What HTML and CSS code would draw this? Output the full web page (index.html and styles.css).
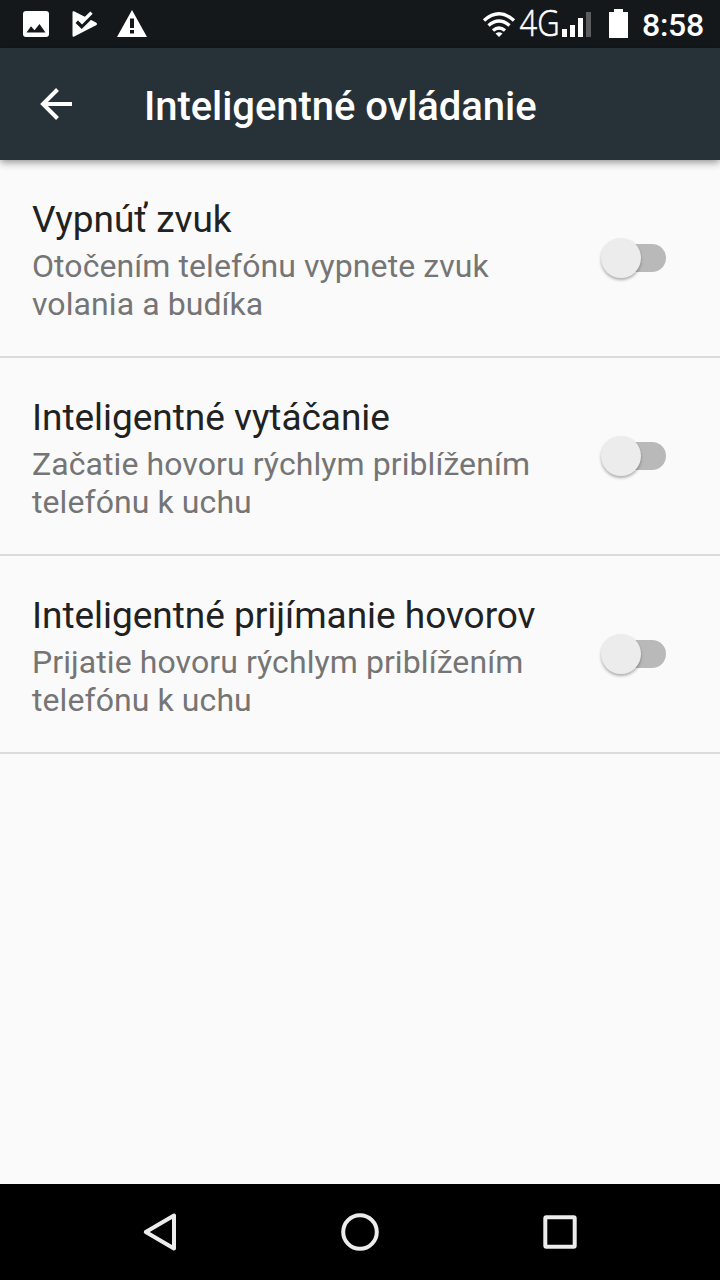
FILE: index.html
```html
<!DOCTYPE html>
<html lang="sk">
<head>
<meta charset="utf-8">
<title>Inteligentné ovládanie</title>
<link rel="stylesheet" href="styles.css">
</head>
<body>
<div class="screen">
  <div class="status">
    <svg class="notifications" width="180" height="48" viewBox="0 0 180 48" fill="#fff">
      <path fill-rule="evenodd" d="M26 11H46Q49 11 49 14V34Q49 37 46 37H26Q23 37 23 34V14Q23 11 26 11ZM26.5 32.5H45.5L39.5 24L34.5 30.3L31 26.2Z"/>
      <path d="M74 11.3Q72.500 10.700 72.500 12.500V35.500Q72.500 37.300 74.200 36.500L96 25.300Q98 24 96 22.500L74 11.300Z"/>
      <path d="M77 21.500L81.700 26.200L97 11" fill="none" stroke="#14181b" stroke-width="4"/>
      <path d="M79.200 19.300L82 22L91.500 12.600" fill="none" stroke="#fff" stroke-width="3.400"/>
      <path fill-rule="evenodd" d="M132 10L147 37H117ZM130 18.500V28H134V18.500ZM130 30V33.500H134V30Z"/>
    </svg>
    <svg class="signals" width="160" height="48" viewBox="472 0 160 48">
      <g fill="none" stroke="#fff" stroke-width="3.400">
        <path d="M484 20.500Q499 7.200 514 20.500"/>
        <path d="M488.500 25.500Q499 16.500 509.500 25.500"/>
        <path d="M493 30.500Q499 25.500 505 30.500"/>
      </g>
      <path d="M495.500 33.500Q499 31 502.500 33.500L499 37Z" fill="#fff"/>
      <text class="network" x="519.500" y="35.700" textLength="40" lengthAdjust="spacingAndGlyphs">4G</text>
      <path d="M562 29h5v8h-5zM570 25h5v12h-5zM578 18h5v19h-5z" fill="#fff"/>
      <path d="M586 12h5v25h-5z" fill="#5b5d5f"/>
      <path d="M614 9h9v3h5v26h-19V12h5z" fill="#fff"/>
    </svg>
    <span class="clock">8:58</span>
  </div>
  <header class="appbar">
    <svg width="40" height="40" viewBox="36 84 40 40" fill="none" stroke="#fff" stroke-width="4"><path d="M72 104H43M57.500 89.500L43 104L57.500 118.500"/></svg>
    <h1 class="heading">Inteligentné ovládanie</h1>
  </header>
  <main class="list">
    <section class="row">
      <div class="label"><h2 class="title">Vypnúť zvuk</h2><p class="summary">Otočením telefónu vypnete zvuk<br>volania a budíka</p></div>
      <div class="switch"><span class="thumb"></span></div>
    </section>
    <section class="row">
      <div class="label"><h2 class="title">Inteligentné vytáčanie</h2><p class="summary">Začatie hovoru rýchlym priblížením<br>telefónu k uchu</p></div>
      <div class="switch"><span class="thumb"></span></div>
    </section>
    <section class="row">
      <div class="label"><h2 class="title">Inteligentné prijímanie hovorov</h2><p class="summary">Prijatie hovoru rýchlym priblížením<br>telefónu k uchu</p></div>
      <div class="switch"><span class="thumb"></span></div>
    </section>
  </main>
  <nav class="navbar">
    <svg width="40" height="40" viewBox="0 0 40 40"><path d="M5.800 20L34 3.500V36.500Z"/></svg>
    <svg width="40" height="40" viewBox="0 0 40 40"><circle cx="20" cy="20" r="16.800"/></svg>
    <svg width="40" height="40" viewBox="0 0 40 40"><rect x="5.300" y="5.300" width="29.400" height="29.400" rx="1"/></svg>
  </nav>
</div>
</body>
</html>
```
FILE: styles.css
```css
body {
  margin: 0;
  background: #fafafa;
  font-family: Roboto, "Liberation Sans", sans-serif;
}
h1, h2, p {
  margin: 0;
}
svg {
  display: block;
  flex: none;
}
.screen {
  width: 720px;
  height: 1280px;
  display: flex;
  flex-direction: column;
  overflow: hidden;
}
.status {
  height: 48px;
  display: flex;
  background: #14181b;
  color: #fff;
}
.signals {
  margin-left: 292px;
  overflow: visible;
}
.network {
  font-family: "Open Sans", sans-serif;
  font-size: 37px;
  font-weight: 300;
  fill: #fff;
  stroke: #fff;
  stroke-width: 0.6px;
}
.clock {
  margin-left: 10px;
  line-height: 50px;
  font-size: 32px;
  font-weight: 500;
  letter-spacing: -0.3px;
}
.appbar {
  height: 112px;
  display: flex;
  align-items: center;
  padding-left: 36px;
  box-sizing: border-box;
  background: #273238;
  color: #fff;
  box-shadow: 0 2px 8px rgba(0, 0, 0, 0.45);
}
.heading {
  margin-left: 68px;
  padding-top: 6px;
  font-size: 40px;
  line-height: 48px;
  font-weight: 500;
  letter-spacing: -0.07px;
  white-space: nowrap;
}
.list {
  flex: 1;
}
.row {
  height: 198px;
  box-sizing: border-box;
  padding: 37px 54px 0 32px;
  border-bottom: 2px solid #dbdbdb;
  display: flex;
  justify-content: space-between;
}
.label {
  white-space: nowrap;
}
.title {
  font-size: 37px;
  line-height: 46px;
  font-weight: 400;
  letter-spacing: -0.03px;
  color: #212121;
}
.summary {
  margin-top: 4px;
  font-size: 32px;
  line-height: 38px;
  letter-spacing: 0.08px;
  color: #757575;
}
.switch {
  width: 56px;
  height: 28px;
  margin-top: 47px;
  border-radius: 14px;
  background: #b9b9b9;
  display: flex;
  align-items: center;
}
.thumb {
  width: 40px;
  height: 40px;
  margin-left: -9px;
  border-radius: 50%;
  background: #ececec;
  box-shadow: 0 2px 3px rgba(0, 0, 0, 0.3);
}
.navbar {
  height: 96px;
  display: flex;
  align-items: center;
  justify-content: center;
  gap: 160px;
  background: #000;
  fill: none;
  stroke: #ececec;
  stroke-width: 4;
  stroke-linejoin: round;
}
```
